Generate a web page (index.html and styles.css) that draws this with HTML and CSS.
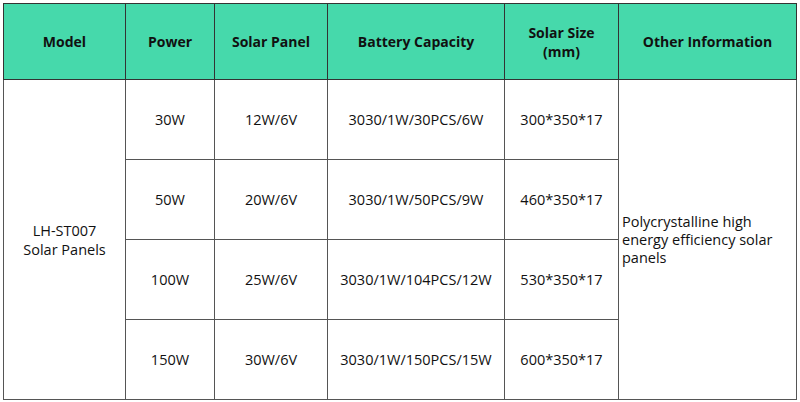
FILE: index.html
```html
<!DOCTYPE html>
<html>
<head>
<meta charset="utf-8">
<link rel="stylesheet" href="styles.css">
</head>
<body>
<table class="spec">
  <colgroup>
    <col class="c1"><col class="c2"><col class="c3"><col class="c4"><col class="c5"><col class="c6">
  </colgroup>
  <thead>
    <tr class="head">
      <th>Model</th>
      <th>Power</th>
      <th>Solar Panel</th>
      <th>Battery Capacity</th>
      <th>Solar Size<br>(mm)</th>
      <th>Other Information</th>
    </tr>
  </thead>
  <tbody>
    <tr>
      <td rowspan="4">LH-ST007<br>Solar Panels</td>
      <td>30W</td>
      <td>12W/6V</td>
      <td>3030/1W/30PCS/6W</td>
      <td>300*350*17</td>
      <td rowspan="4" class="info">Polycrystalline high energy efficiency solar panels</td>
    </tr>
    <tr>
      <td>50W</td>
      <td>20W/6V</td>
      <td>3030/1W/50PCS/9W</td>
      <td>460*350*17</td>
    </tr>
    <tr>
      <td>100W</td>
      <td>25W/6V</td>
      <td>3030/1W/104PCS/12W</td>
      <td>530*350*17</td>
    </tr>
    <tr>
      <td>150W</td>
      <td>30W/6V</td>
      <td>3030/1W/150PCS/15W</td>
      <td>600*350*17</td>
    </tr>
  </tbody>
</table>
</body>
</html>
```
FILE: styles.css
```css
html, body {
  margin: 0;
  padding: 0;
  background: #fff;
}
body {
  padding: 3px 0 0 3px;
  font-family: "Open Sans", "Noto Sans", sans-serif;
  font-size: 14.5px;
  color: #111;
}
.spec {
  border-collapse: collapse;
  table-layout: fixed;
  width: 793px;
  border: 1px solid #7f7f7f;
}
.c1 { width: 122px; }
.c2 { width: 89px; }
.c3 { width: 113px; }
.c4 { width: 177px; }
.c5 { width: 114px; }
.c6 { width: 178px; }
.spec th, .spec td {
  border: 1px solid #555;
  text-align: center;
  vertical-align: middle;
  padding: 0;
  line-height: 19px;
}
.spec .head th {
  background: #46d9ab;
  font-weight: 700;
  font-size: 14px;
  height: 75px;
  border-color: #333;
}
.spec tbody td {
  height: 79px;
}
.spec td.info {
  text-align: left;
  padding-left: 3px;
  padding-right: 20px;
  line-height: 18px;
}
```
